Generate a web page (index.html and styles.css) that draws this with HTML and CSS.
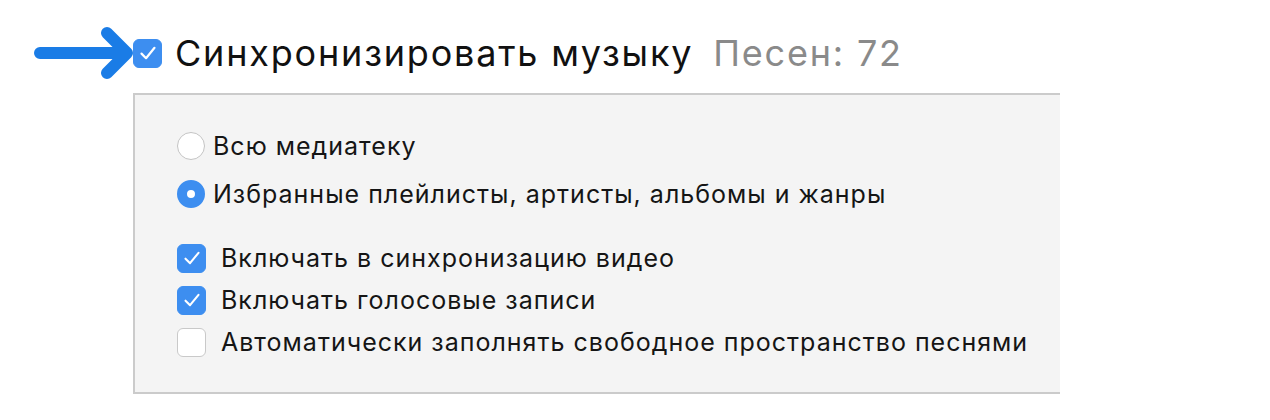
FILE: index.html
```html
<!DOCTYPE html>
<html lang="ru">
<head>
    <meta charset="UTF-8">
    <meta name="viewport" content="width=device-width, initial-scale=1.0">
    <title>Синхронизация музыки</title>
    <link rel="stylesheet" href="styles.css">
</head>
<body>
    <div class="sync-header">
        <svg class="pointer" width="100" height="54" viewBox="0 0 100 54">
            <path d="M6 27 H93 M73 7 L93 27 L73 47" fill="none" stroke="#1a7ce6" stroke-width="12" stroke-linecap="round" stroke-linejoin="round"/>
        </svg>
        <span class="check big checked">
            <svg viewBox="0 0 20 20"><path d="M5 10.5 L8.5 14 L15 6" fill="none" stroke="#fff" stroke-width="1.7" stroke-linecap="round" stroke-linejoin="round"/></svg>
        </span>
        <h1 class="title">Синхронизировать музыку</h1>
        <span class="count">Песен: 72</span>
    </div>

    <div class="sync-panel">
        <div class="radio-list">
            <label class="option">
                <span class="radio"></span>
                Всю медиатеку
            </label>
            <label class="option">
                <span class="radio selected"></span>
                Избранные плейлисты, артисты, альбомы и жанры
            </label>
        </div>

        <div class="check-list">
            <label class="option">
                <span class="check checked">
                    <svg viewBox="0 0 20 20"><path d="M5 10.5 L8.5 14 L15 6" fill="none" stroke="#fff" stroke-width="1.6" stroke-linecap="round" stroke-linejoin="round"/></svg>
                </span>
                Включать в синхронизацию видео
            </label>
            <label class="option">
                <span class="check checked">
                    <svg viewBox="0 0 20 20"><path d="M5 10.5 L8.5 14 L15 6" fill="none" stroke="#fff" stroke-width="1.6" stroke-linecap="round" stroke-linejoin="round"/></svg>
                </span>
                Включать голосовые записи
            </label>
            <label class="option">
                <span class="check"></span>
                Автоматически заполнять свободное пространство песнями
            </label>
        </div>
    </div>
</body>
</html>
```
FILE: styles.css
```css
body {
    margin: 0;
    background: #fff;
    font-family: Inter, "Liberation Sans", sans-serif;
    color: #111;
}
.sync-header {
    display: flex;
    align-items: center;
    height: 93px;
    padding-left: 34px;
    padding-top: 13px;
    box-sizing: border-box;
}
.pointer {
    display: block;
    margin-right: -1px;
}
.title {
    margin: 0 0 0 13px;
    font-size: 36px;
    font-weight: normal;
    letter-spacing: 1.8px;
}
.count {
    margin: 0 0 0 20px;
    font-size: 36px;
    color: #8a8a8a;
    letter-spacing: 1.8px;
}
.check {
    display: inline-flex;
    align-items: center;
    justify-content: center;
    width: 26px;
    height: 26px;
    box-sizing: border-box;
    border: 1px solid #c9c9c9;
    border-radius: 6px;
    background: #fff;
    flex-shrink: 0;
}
.check svg {
    width: 26px;
    height: 26px;
}
.check.checked {
    background: #3d8ef0;
    border-color: #3d8ef0;
}
.check.big {
    width: 29px;
    height: 29px;
}
.sync-panel {
    margin-left: 133px;
    width: 927px;
    height: 301px;
    box-sizing: border-box;
    background: #f4f4f4;
    border: 2px solid #cbcbcb;
    border-right: none;
    padding: 37px 0 0 42px;
}
.option {
    display: flex;
    align-items: center;
    height: 28px;
    line-height: 28px;
    font-size: 25px;
    letter-spacing: 1px;
    color: #151515;
}
.radio-list {
    display: flex;
    flex-direction: column;
    gap: 20px;
}
.radio-list .option {
    gap: 8px;
}
.radio {
    width: 28px;
    height: 28px;
    box-sizing: border-box;
    border-radius: 50%;
    border: 1px solid #c4c4c4;
    background: #fff;
    flex-shrink: 0;
}
.radio.selected {
    border: 10px solid #3d8ef0;
}
.check-list {
    display: flex;
    flex-direction: column;
    gap: 14px;
    margin-top: 36px;
}
.check-list .option {
    gap: 15px;
}
.check-list .check {
    width: 29px;
    height: 29px;
}
```
